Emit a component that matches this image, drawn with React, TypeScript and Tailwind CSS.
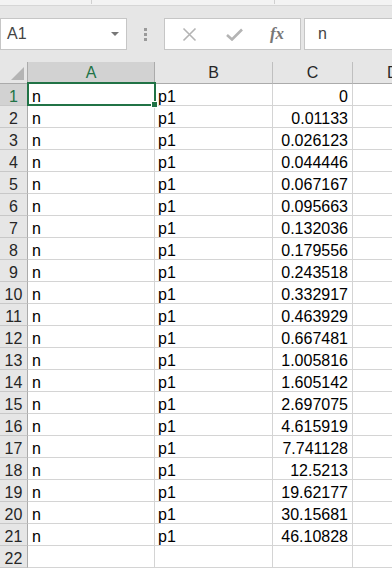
const rows: [string, string, string][] = [
  ["n", "p1", "0"],
  ["n", "p1", "0.01133"],
  ["n", "p1", "0.026123"],
  ["n", "p1", "0.044446"],
  ["n", "p1", "0.067167"],
  ["n", "p1", "0.095663"],
  ["n", "p1", "0.132036"],
  ["n", "p1", "0.179556"],
  ["n", "p1", "0.243518"],
  ["n", "p1", "0.332917"],
  ["n", "p1", "0.463929"],
  ["n", "p1", "0.667481"],
  ["n", "p1", "1.005816"],
  ["n", "p1", "1.605142"],
  ["n", "p1", "2.697075"],
  ["n", "p1", "4.615919"],
  ["n", "p1", "7.741128"],
  ["n", "p1", "12.5213"],
  ["n", "p1", "19.62177"],
  ["n", "p1", "30.15681"],
  ["n", "p1", "46.10828"],
  ["", "", ""],
];

const cell = "box-border h-[22px] border-r border-b border-[#d4d4d4] flex items-end leading-[17px] overflow-hidden whitespace-nowrap";

export default function App() {
  return (
    <div className="relative w-[392px] h-[568px] overflow-hidden bg-white text-black" style={{ fontFamily: '"Liberation Sans", Arial, sans-serif' }}>
      {/* ribbon edge */}
      <div className="flex h-[6px] bg-[#f3f3f3] border-b border-[#d6d6d6]">
        <div className="w-[92px] h-[4px] border-r border-[#d0d0d0]" />
        <div className="w-[183px] h-[4px] border-r border-[#d0d0d0]" />
      </div>

      {/* formula bar */}
      <div className="h-[56px] bg-[#e6e6e6] pt-[12px] flex items-start">
        <div className="w-[127px] h-[32px] bg-white border border-[#c6c6c6] flex items-center pl-[6px] pr-[7px]">
          <span className="text-[16px] text-[#444] flex-1">A1</span>
          <span className="w-0 h-0 border-l-[4px] border-r-[4px] border-t-[4px] border-l-transparent border-r-transparent border-t-[#777]" />
        </div>
        <div className="w-[37px] h-[32px] flex flex-col items-center justify-center gap-[2px]">
          <span className="w-[3px] h-[3px] bg-[#9a9a9a]" />
          <span className="w-[3px] h-[3px] bg-[#9a9a9a]" />
          <span className="w-[3px] h-[3px] bg-[#9a9a9a]" />
        </div>
        <div className="w-[137px] h-[32px] bg-white border border-[#c6c6c6] flex items-center">
          <div className="w-[48px] flex justify-center">
            <svg width="15" height="15" viewBox="0 0 15 15">
              <path d="M1.5 1.5 L13.5 13.5 M13.5 1.5 L1.5 13.5" stroke="#b4b4b4" strokeWidth="1.6" fill="none" />
            </svg>
          </div>
          <div className="w-[42px] flex justify-center">
            <svg width="17" height="13" viewBox="0 0 17 13">
              <path d="M1 7 L6 11.5 L16 1.5" stroke="#b4b4b4" strokeWidth="2.6" fill="none" />
            </svg>
          </div>
          <div className="w-[44px] flex justify-center">
            <span className="text-[17px] italic font-bold text-[#777]" style={{ fontFamily: '"Liberation Serif", "Times New Roman", serif' }}>fx</span>
          </div>
        </div>
        <div className="ml-[3px] flex-1 h-[32px] bg-white border border-[#c6c6c6] border-r-0 flex items-center pl-[13px]">
          <span className="text-[16px] text-[#444]">n</span>
        </div>
      </div>

      {/* grid */}
      <div className="grid grid-cols-[28px_127px_118px_80px_39px] auto-rows-[22px] text-[16px]">
        <div className="h-[22px] bg-[#e6e6e6] border-r border-b border-[#ababab] flex items-end justify-end p-[3px]">
          <svg width="13" height="13" viewBox="0 0 13 13">
            <path d="M13 0 L13 13 L0 13 Z" fill="#b4b4b4" />
          </svg>
        </div>
        <div className="h-[22px] bg-[#d2d2d2] border-r border-b border-[#ababab] flex items-center justify-center text-[#217346]">A</div>
        <div className="h-[22px] bg-[#e6e6e6] border-r border-b border-[#bfbfbf] border-b-[#ababab] flex items-center justify-center text-[#262626]">B</div>
        <div className="h-[22px] bg-[#e6e6e6] border-r border-b border-[#bfbfbf] border-b-[#ababab] flex items-center justify-center text-[#262626]">C</div>
        <div className="h-[22px] bg-[#e6e6e6] border-b border-[#ababab] flex items-center pl-[34px] text-[#262626] overflow-hidden">D</div>

        {rows.map((r, i) => (
          <div key={i} className="contents">
            <div className={`${cell} justify-center border-r-[#ababab] border-b-[#c8c8c8] ${i === 0 ? "bg-[#d2d2d2] text-[#217346]" : "bg-[#e6e6e6] text-[#262626]"}`}>{i + 1}</div>
            <div className={`${cell} pl-[4px]`}>{r[0]}</div>
            <div className={`${cell} pl-[3px]`}>{r[1]}</div>
            <div className={`${cell} justify-end pr-[4px]`}>{r[2]}</div>
            <div className={`${cell} border-r-0`} />
          </div>
        ))}
      </div>

      {/* selection */}
      <div className="absolute left-[27px] top-[82px] w-[129px] h-[24px] border-2 border-[#217346] pointer-events-none" />
      <div className="absolute left-[151px] top-[101px] w-[7px] h-[7px] bg-[#217346] border border-white" />
    </div>
  );
}
